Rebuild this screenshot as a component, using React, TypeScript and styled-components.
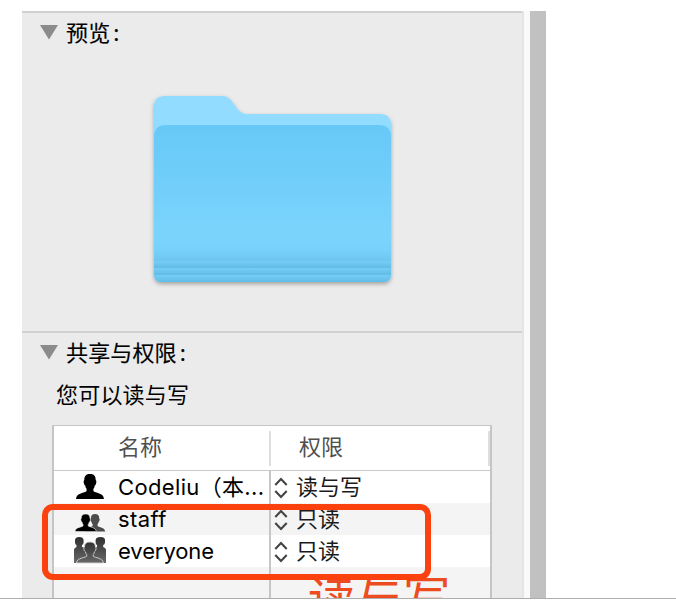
import React from "react";
import styled, { createGlobalStyle } from "styled-components";

const GlobalStyle = createGlobalStyle`
  * { box-sizing: border-box; }
  html, body { margin: 0; background: #fff; overflow: hidden; }
  body { font-family: Inter, "Noto Sans CJK SC", sans-serif; font-size: 22px; color: #0b0b0b; }
`;

const Page = styled.main`
  position: relative;
  width: 676px;
  height: 600px;
  padding: 11px 0 0 22px;
  overflow: hidden;
`;

const Window = styled.div`
  display: flex;
  height: 587px;
  overflow: hidden;
`;

const Inspector = styled.section`
  width: 502px;
  flex: none;
  background: #ebebeb;
  border-right: 2px solid #e5e5e5;
`;

const Scrollbar = styled.div`
  width: 16px;
  margin-left: 6px;
  background: #c1c1c1;
  box-shadow: -6px 0 #fafafa;
`;

const Baseline = styled.div`
  height: 1px;
  margin-left: -22px;
  background: #adadad;
`;

const Section = styled.div<{ $height: number }>`
  height: ${(p) => p.$height}px;
  border-top: 2px solid #d1d1d1;
`;

const SectionTitle = styled.h2`
  display: flex;
  align-items: center;
  height: 40px;
  margin: 0;
  padding-left: 18px;
  gap: 8px;
  font: 400 22px/36px "Noto Sans CJK SC", sans-serif;
  color: #000;
`;

const TitleText = styled.span`
  height: 40px;
  letter-spacing: 0.15px;
  -webkit-text-stroke: 0.15px currentColor;
`;

const Colon = styled.span`
  margin-left: 3px;
`;

const FolderArt = styled.svg`
  display: block;
  margin: 32px 0 0 120px;
`;

const Summary = styled.p`
  margin: 0 0 0 34px;
  height: 52px;
  font: 400 22px/41px "Noto Sans CJK SC", sans-serif;
  letter-spacing: 0.2px;
  color: #000;
`;

const Table = styled.div`
  width: 440px;
  height: 180px;
  margin-left: 30px;
  border: solid #c5c5c5;
  border-width: 1px 2px 0;
  background: #fff;
`;

const HeaderRow = styled.div`
  display: flex;
  align-items: center;
  height: 45px;
  border-bottom: 1px solid #c9c9c9;
  color: #505050;
`;

const HeaderCell = styled.div<{ $width: number; $indent: number }>`
  width: ${(p) => p.$width}px;
  height: 35px;
  padding-left: ${(p) => p.$indent}px;
  border-right: 2px solid #dedede;
  font: 400 22px/29px "Noto Sans CJK SC", sans-serif;
`;

const Row = styled.div<{ $shaded?: boolean }>`
  display: flex;
  height: 32px;
  background: ${(p) => (p.$shaded ? "#f4f4f4" : "#fff")};
`;

const NameCell = styled.div`
  display: flex;
  align-items: center;
  width: 217px;
  border-right: 2px solid #c6c6c6;
`;

const Avatar = styled.svg`
  flex: none;
  margin-left: 19px;
`;

const Name = styled.span<{ $spacing: number }>`
  margin-left: 11px;
  line-height: 32px;
  letter-spacing: ${(p) => p.$spacing}px;
  white-space: nowrap;
  color: #000;
`;

const AccessCell = styled.div`
  display: flex;
  padding-left: 3px;
  gap: 8px;
  font: 400 22px/29px "Noto Sans CJK SC", sans-serif;
  color: #1b1b1b;
`;

const StepperIcon = styled.svg`
  margin-top: 6px;
`;

const Highlight = styled.div`
  position: absolute;
  left: 42px;
  top: 504px;
  width: 389px;
  height: 76px;
  border: 6px solid #fa410e;
  border-radius: 11px;
`;

const NoteWindow = styled.div`
  position: absolute;
  left: 308px;
  top: 572px;
  width: 150px;
  height: 26px;
  overflow: hidden;
  font: 400 47.5px/48px "Noto Sans CJK SC", sans-serif;
  color: #ed4c20;
`;

const Disclosure = () => (
  <svg width="18" height="16" viewBox="0 0 18 16">
    <path d="M0 0H18L9 14.5Z" fill="#8b8b8b" />
  </svg>
);

const Stepper = () => (
  <StepperIcon width="14" height="22" viewBox="0 0 14 22" fill="none" stroke="#444" strokeWidth="2.1">
    <path d="M1.3 8L7 2L12.7 8M1.3 14L7 20L12.7 14" />
  </StepperIcon>
);

const Folder = () => (
  <FolderArt width="260" height="205" viewBox="142 85 260 205">
    <defs>
      <linearGradient id="front" x2="0" y2="1">
        <stop stopColor="#67c8f7" />
        <stop offset=".7" stopColor="#7bd4fc" />
        <stop offset=".8" stopColor="#78d1fa" />
        <stop offset=".87" stopColor="#6cc5ef" />
        <stop offset="1" stopColor="#6cc5ef" />
      </linearGradient>
      <linearGradient id="fold" x2="0" y2="1">
        <stop stopColor="#77cdf5" />
        <stop offset="1" stopColor="#60bce6" />
      </linearGradient>
      <filter id="shadow" x="-10%" y="-10%" width="120%" height="120%">
        <feDropShadow dx="0" dy="2" stdDeviation="2" floodOpacity=".32" />
      </filter>
      <clipPath id="face">
        <path d="M154 137Q154 125 166 125H379Q391 125 391 137V274Q391 282 383 282H162Q154 282 154 274Z" />
      </clipPath>
    </defs>
    <path
      filter="url(#shadow)"
      fill="#92dcff"
      d="M154 106Q154 96 165 96H222C230 96 232 102 236 107Q241 114 246 114H380Q391 114 391 125V274Q391 282 383 282H162Q154 282 154 274Z"
    />
    <g clipPath="url(#face)">
      <rect x="154" y="125" width="237" height="157" fill="url(#front)" />
      <rect x="154" y="261" width="237" height="7" fill="url(#fold)" />
      <rect x="154" y="268" width="237" height="7" fill="url(#fold)" />
      <rect x="154" y="275" width="237" height="7" fill="url(#fold)" />
    </g>
  </FolderArt>
);

const person =
  "M8.3 6C8.3 1.8 10.2 0 14 0S19.7 1.8 19.7 6Q20.8 6.5 20.2 9Q19.8 11 18.7 11.7Q18.4 14 17.4 14.8V17C19 19 27.8 18.7 28 25H0C.2 18.7 9 19 10.6 17V14.8Q9.6 14 9.3 11.7Q8.2 11 7.8 9Q7.2 6.5 8.3 6Z";

const UserIcon = () => (
  <Avatar width="34" height="32" viewBox="0 0 34 32">
    <path transform="translate(3 3)" d={person} />
  </Avatar>
);

const StaffIcon = () => (
  <Avatar width="34" height="32" viewBox="0 0 34 32">
    <path transform="translate(12 11) scale(.72 .7)" fill="#4c4c4c" d={person} />
    <path transform="translate(2 11) scale(.76 .7)" stroke="#eee" strokeWidth=".8" d={person} />
  </Avatar>
);

const EveryoneIcon = () => (
  <Avatar width="34" height="32" viewBox="0 0 34 32">
    <defs>
      <linearGradient id="crowd" x2="0" y2="1">
        <stop stopColor="#303030" />
        <stop offset="1" stopColor="#686868" />
      </linearGradient>
    </defs>
    <path
      fill="url(#crowd)"
      d="M1 28V14.5Q1 13 3.5 12V10Q2 9.5 2 7.5V5Q2.3 2 6.3 2T10.6 5V7.5Q10.5 9.5 9 10V12Q15 13 17 17Q19 13 24 12V10Q22.6 9.5 22.6 7.5V5Q23 2 27.5 2T32 5V7.5Q31.8 9.5 30.2 10V12Q33 13 33 14.5V28Z"
    />
    <path transform="translate(3.5 7) scale(.96 .84)" fill="url(#crowd)" stroke="#d4d4d4" strokeWidth="1" d={person} />
  </Avatar>
);

const accounts = [
  { name: "Codeliu（本...", access: "读与写", Icon: UserIcon, spacing: 0.35 },
  { name: "staff", access: "只读", Icon: StaffIcon, spacing: 0.4 },
  { name: "everyone", access: "只读", Icon: EveryoneIcon, spacing: -0.1 },
];

export default function App() {
  return (
    <>
      <GlobalStyle />
      <Page>
        <Window>
          <Inspector>
            <Section $height={320}>
              <SectionTitle><Disclosure /><TitleText>预览<Colon>:</Colon></TitleText></SectionTitle>
              <Folder />
            </Section>
            <Section $height={267}>
              <SectionTitle><Disclosure /><TitleText>共享与权限<Colon>:</Colon></TitleText></SectionTitle>
              <Summary>您可以读与写</Summary>
              <Table>
                <HeaderRow>
                  <HeaderCell $width={217} $indent={64}>名称</HeaderCell>
                  <HeaderCell $width={219} $indent={28}>权限</HeaderCell>
                </HeaderRow>
                {accounts.map(({ name, access, Icon, spacing }, i) => (
                  <Row key={name} $shaded={i % 2 === 1}>
                    <NameCell><Icon /><Name $spacing={spacing}>{name}</Name></NameCell>
                    <AccessCell><Stepper />{access}</AccessCell>
                  </Row>
                ))}
                <Row $shaded><NameCell /></Row>
              </Table>
            </Section>
          </Inspector>
          <Scrollbar />
        </Window>
        <Baseline />
        <NoteWindow>读与写</NoteWindow>
        <Highlight />
      </Page>
    </>
  );
}
